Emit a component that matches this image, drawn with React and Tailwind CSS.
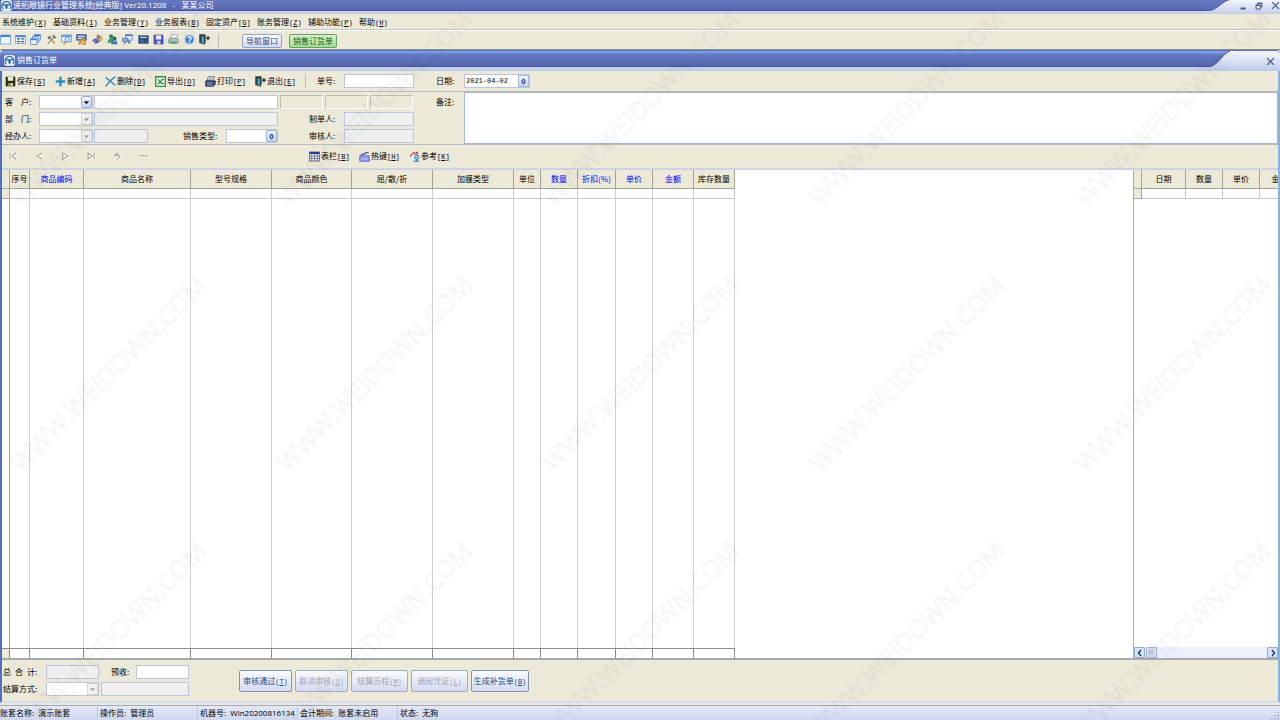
import { useState } from "react";
import clsx from "clsx";

/* ---------- static data ---------- */

const menus = [
  ["系统维护", "X"],
  ["基础资料", "I"],
  ["业务管理", "Y"],
  ["业务报表", "B"],
  ["固定资产", "G", true],
  ["账务管理", "Z"],
  ["辅助功能", "P"],
  ["帮助", "H"],
];

const gridColumns = [
  { title: "序号", width: 20 },
  { title: "商品编码", width: 54, blue: true },
  { title: "商品名称", width: 107 },
  { title: "型号规格", width: 81 },
  { title: "商品颜色", width: 80 },
  { title: "屈/散/折", width: 81 },
  { title: "加膜类型", width: 81 },
  { title: "单位", width: 27 },
  { title: "数量", width: 37, blue: true },
  { title: "折扣(%)", width: 38, blue: true },
  { title: "单价", width: 37, blue: true },
  { title: "金额", width: 41, blue: true },
  { title: "库存数量", width: 41 },
];

const historyColumns = [
  { title: "日期", width: 44 },
  { title: "数量", width: 37 },
  { title: "单价", width: 37 },
  { title: "金额", width: 40 },
];

const statusItems = [
  "账套名称:  演示账套",
  "操作员:  管理员",
  "机器号:  Win20200816134",
  "会计期间:  账套未启用",
  "状态:  无狗",
];

/* ---------- icons ---------- */

function Svg({ children, className = "size-[11px]" }) {
  return (
    <svg viewBox="0 0 16 16" className={clsx("shrink-0", className)} fill="none" aria-hidden="true">
      {children}
    </svg>
  );
}

function AppIcon() {
  return (
    <Svg>
      <rect x="0.5" y="0.5" width="15" height="15" rx="3" fill="#dcecf8" stroke="#f4faff" />
      <path d="M3 13a6.500 6.500 0 1 1 10 0" stroke="#1f5f94" strokeWidth="1.800" />
      <path d="M3 7h10M8 7v6M6 10h4" stroke="#1f5f94" strokeWidth="1.800" />
    </Svg>
  );
}

const toolIcons = {
  导航: (
    <>
      <rect x="1" y="1.500" width="14" height="13" fill="#fff" stroke="#4c86dc" />
      <path d="M1 3h14" stroke="#3f7fe0" strokeWidth="3" />
      <path d="M4 5v9M6 8h7M6 11h7" stroke="#cfe0f6" />
    </>
  ),
  窗体: (
    <>
      <rect x="1" y="2" width="14" height="12" fill="#e6eefb" stroke="#7b8db5" />
      <path d="M1 3h14" stroke="#4b84de" strokeWidth="3" />
      <path d="M3 7h4M3 11h4M9 7h4M9 11h4" stroke="#3a4f85" strokeWidth="2" />
    </>
  ),
  层叠: (
    <>
      <rect x="6" y="1" width="9" height="8" fill="#dbe8fb" stroke="#3f74cc" />
      <path d="M6 2h9" stroke="#3f7fe0" strokeWidth="2" />
      <rect x="3.500" y="4" width="9" height="8" fill="#dbe8fb" stroke="#3f74cc" />
      <rect x="1" y="7" width="9" height="8" fill="#eef4fd" stroke="#3f74cc" />
      <path d="M1 8h9" stroke="#3f7fe0" strokeWidth="2" />
    </>
  ),
  工具: (
    <>
      <path d="M3 14L12 4" stroke="#8b93a0" strokeWidth="2" />
      <path d="M10 2l4 4" stroke="#6a7280" strokeWidth="2.500" />
      <path d="M5 5l8 9" stroke="#d18a35" strokeWidth="2" />
      <path d="M2 5l4-3 1 3-3 3z" fill="#66707d" />
    </>
  ),
  查询: (
    <>
      <rect x="1" y="1.500" width="14" height="10" fill="#eef5fd" stroke="#4a7ccc" />
      <path d="M1 3h14" stroke="#4b84de" strokeWidth="2" />
      <circle cx="9" cy="8" r="3.500" fill="#bfe6f4" stroke="#4f8aa6" />
      <path d="M7 11l-3 4" stroke="#c98b33" strokeWidth="2" />
    </>
  ),
  编辑: (
    <>
      <rect x="1" y="1" width="14" height="8" fill="#5d7cc4" stroke="#34508f" />
      <path d="M3 3.500h9M3 6.500h6" stroke="#e6edfa" strokeWidth="1.500" />
      <path d="M14 7l-6 6-4 2 1-4 6-5z" fill="#e7a63a" stroke="#a5691a" />
      <path d="M13 9v6H9" stroke="#d59028" strokeWidth="2.500" />
    </>
  ),
  单据: (
    <>
      <path d="M1 9l6-3 4 5-6 3z" fill="#7d86ce" stroke="#414c9b" />
      <path d="M7 4l5-2 3 6-4 3z" fill="#e9c46b" stroke="#a7792b" />
      <path d="M8 1l3 6M5 8l3 5" stroke="#3b47a4" strokeWidth="1.500" />
    </>
  ),
  客户: (
    <>
      <circle cx="6" cy="3.500" r="3" fill="#2f7f57" />
      <path d="M1 13c0-5 2-7 5-7s4 2 4 6z" fill="#3c9a68" />
      <circle cx="11" cy="6.500" r="2.800" fill="#2f5d8b" />
      <path d="M6 15c0-4 2-6 5-6s4 2 4 6z" fill="#2c72b0" />
      <path d="M10 10l1 3 1-3" fill="#fff" />
    </>
  ),
  报表: (
    <>
      <rect x="5" y="1" width="10" height="8" fill="#d9e6fa" stroke="#5d7fbb" />
      <path d="M5 2h10" stroke="#4878cc" strokeWidth="2" />
      <rect x="1" y="6" width="7" height="5" fill="#93b4e6" stroke="#46679f" />
      <path d="M10 8v6M5 11l-2 4M8 12h5" stroke="#476aa6" strokeWidth="1.500" />
    </>
  ),
  计算: (
    <>
      <rect x="1" y="2" width="14" height="12" fill="#28466f" stroke="#5476a8" />
      <path d="M3 5h10" stroke="#b7d0ef" strokeWidth="2" />
      <path d="M3 9h6M3 12h6M11 9h2M11 12h2" stroke="#6f91c1" />
    </>
  ),
  存盘: (
    <>
      <path d="M1.500 1.500h13v13h-13z" fill="#4a4fc4" stroke="#30369b" />
      <path d="M4 2h8v6H4z" fill="#e9edfb" />
      <path d="M5 10h6v5H5z" fill="#c5cce9" />
      <path d="M6 11v3" stroke="#30369b" />
    </>
  ),
  打印: (
    <>
      <path d="M6 1h8l-1 6H3z" fill="#fff" stroke="#8b96a8" />
      <path d="M1 8l3-2h8l3 2v5H1z" fill="#b7c0cc" stroke="#6c7788" />
      <path d="M3 11h10v3H3z" fill="#54ae5d" />
    </>
  ),
  帮助: (
    <>
      <circle cx="8" cy="8" r="6.500" fill="#3f83dc" stroke="#9abdee" strokeWidth="1.500" />
      <path d="M5.500 6c0-3 5-3 5 0 0 2-2.500 1.500-2.500 4M8 11v2" stroke="#fff" strokeWidth="1.800" />
    </>
  ),
  退出: (
    <>
      <path d="M1 1h8v12H1z" fill="#3b434c" stroke="#20262c" />
      <path d="M3 2l5 2v11l-5-2z" fill="#46a2b4" stroke="#20313a" />
      <path d="M10 6h6M13 3v6" stroke="#20262c" strokeWidth="1.800" />
    </>
  ),
};

const formIcons = {
  save: (
    <>
      <path d="M1 1h14v14H1z" fill="#242a12" />
      <path d="M4 1h8v6H4z" fill="#e9e9df" />
      <path d="M4 10h8v5H4z" fill="#8d9048" />
      <path d="M9 11h2v3H9z" fill="#fff" />
    </>
  ),
  add: <path d="M8 1v14M1 8h14" stroke="#2b8fc6" strokeWidth="3.500" />,
  remove: <path d="M1 2c4 3 9 7 14 12M15 1C9 5 5 9 1 15" stroke="#2f8cc4" strokeWidth="2" />,
  excel: (
    <>
      <path d="M1 1h14v14H1z" fill="#f5fbf5" stroke="#1f9a3c" strokeWidth="2" />
      <path d="M4 5l7 7M11 5l-7 7M9 5h4M9 11h4" stroke="#1f8a3c" strokeWidth="1.600" />
    </>
  ),
  print: (
    <>
      <path d="M5 1h9l-2 6H3z" fill="#fff" stroke="#3b4668" />
      <path d="M6 3h6M5 5h6" stroke="#6c7698" />
      <path d="M1 7h14v5l-3 3H1z" fill="#3e4a72" stroke="#222a45" />
      <path d="M3 10h8M3 13h8" stroke="#b9c3e0" />
    </>
  ),
  exit: toolIcons["退出"],
  columns: (
    <>
      <path d="M.5 1.500h15v13H.5z" fill="#fff" stroke="#20244c" />
      <path d="M1 3h14" stroke="#2a3790" strokeWidth="3" />
      <path d="M1 7.500h14M1 11h14M4 4v10M8 4v10M12 4v10" stroke="#4a5072" />
    </>
  ),
  hotkey: (
    <>
      <path d="M1 7h14v8H1z" fill="#8f93e6" stroke="#5257bd" />
      <path d="M3 7c1-5 5 0 6-4l5-1" stroke="#4a4fb5" strokeWidth="2" />
      <path d="M3 10h10M3 12.500h10" stroke="#e3e4fb" strokeDasharray="2 1" />
    </>
  ),
  refer: (
    <>
      <path d="M1 7l6-6 6 5-2 1-4-3-4 5z" fill="#d9452b" />
      <path d="M3 8l4-4 5 3-1 6-6 1z" fill="#fff" stroke="#b9c6d6" strokeWidth="0.800" />
      <path d="M10 1h3v4l-3-2z" fill="#c23a20" />
      <circle cx="11" cy="9" r="3.500" fill="#7fbdea" stroke="#3f83b6" />
      <path d="M7 15h8M11 12v3" stroke="#3b6f9d" strokeWidth="1.600" />
    </>
  ),
};

const recordIcons = [
  { label: "首条", path: "M3 3v9M12 3L6 7.500l6 4.500M12 3H9" },
  { label: "上一条", path: "M12 3L4 7.500l8 4.500" },
  { label: "下一条", path: "M4 3v9l8-4.500z" },
  { label: "末条", path: "M3 3v9l6-4.500zM12 3v9" },
  { label: "插入", path: "M3 7l5-4M3 7h9M8 12l4-5M8 3v3" },
  { label: "删行", path: "M2 7h11v2" },
];

/* ---------- small controls ---------- */

function Caption({ text, hotkey, square }) {
  return (
    <span className="whitespace-nowrap">
      {text}
      <span className="font-['Liberation_Mono',monospace] text-[7px]">
        {square ? "[" : "("}
        <u>{hotkey}</u>
        {square ? "]" : ")"}
      </span>
    </span>
  );
}

function Field({ id, className, readOnly, ...rest }) {
  return (
    <input
      id={id}
      type="text"
      readOnly={readOnly}
      className={clsx(
        "h-[14px] border border-[#bcc5df] px-px text-[8px] outline-none",
        readOnly ? "bg-[#efefef]" : "bg-white",
        className
      )}
      {...rest}
    />
  );
}

function Arrow({ kind }) {
  if (kind === "ring") {
    return (
      <Svg className="size-[7px]">
        <path d="M8 3l3 3v4l-3 3-3-3V6z" stroke="#36599c" strokeWidth="3" />
      </Svg>
    );
  }
  return (
    <Svg className="size-[7px]">
      <path d="M2 5h12l-6 7z" fill={kind === "off" ? "#a3a3a3" : "#101820"} />
    </Svg>
  );
}

function Combo({ id, className, kind = "on" }) {
  return (
    <div className={clsx("relative shrink-0", className)}>
      <select
        id={id}
        disabled={kind === "off"}
        className="block h-[14px] w-full appearance-none border border-[#bcc5df] bg-white text-[8px] opacity-100 outline-none"
      />
      <span
        className={clsx(
          "pointer-events-none absolute top-px right-px flex h-[12px] w-[11px] items-center justify-center border",
          kind === "off"
            ? "border-[#d5d5d0] bg-[#f1f0ea]"
            : "rounded-[2px] border-[#9aaed6] bg-linear-to-b from-[#f2f6fe] to-[#c6d4f2]"
        )}
      >
        <Arrow kind={kind} />
      </span>
    </div>
  );
}

function FormButton({ icon, text, hotkey }) {
  return (
    <button type="button" className="flex w-[50px] shrink-0 items-center gap-px">
      <Svg>{formIcons[icon]}</Svg>
      <Caption text={text} hotkey={hotkey} square />
    </button>
  );
}

function ActionButton({ text, hotkey, disabled, className }) {
  return (
    <button
      type="button"
      disabled={disabled}
      className={clsx(
        "h-[22px] rounded-[2px] border bg-linear-to-b from-[#fafbff] to-[#d2daf1]",
        disabled ? "border-[#a3abb8] text-[#a2a4ac]" : "border-[#7f93b0] text-[#1f4a7a]",
        className
      )}
    >
      <Caption text={text} hotkey={hotkey} />
    </button>
  );
}

/* sloped right end of a blue caption bar */
function Slope({ id, from, mid, to }) {
  return (
    <svg viewBox="0 0 24 16" preserveAspectRatio="none" className="h-full w-6 shrink-0" aria-hidden="true">
      <defs>
        <linearGradient id={id} x1="0" y1="0" x2="0" y2="1">
          <stop offset="0" stopColor={from} />
          <stop offset="0.25" stopColor={mid} />
          <stop offset="1" stopColor={to} />
        </linearGradient>
      </defs>
      <path d="M0 0H24C17 2 12 15 3 16H0Z" fill={`url(#${id})`} />
      <path d="M24 0C17 2 12 15 3 15.500H0" fill="none" stroke="#46549c" />
    </svg>
  );
}

function Watermark() {
  const spots = [];
  for (let row = 0; row < 3; row++) {
    for (let col = 0; col < 5; col++) {
      spots.push([108 + col * 266, 107 + row * 266]);
    }
  }
  return (
    <svg className="pointer-events-none absolute inset-0 h-full w-full" aria-hidden="true">
      {spots.map(([x, y]) => (
        <text
          key={`${x}-${y}`}
          transform={`translate(${x} ${y}) rotate(-45)`}
          textAnchor="middle"
          dominantBaseline="central"
          fill="none"
          stroke="#000"
          strokeOpacity="0.070"
          strokeWidth="1"
          className="font-['Open_Sans',sans-serif] text-[25px]"
        >
          WWW.WEIDOWN.COM
        </text>
      ))}
    </svg>
  );
}

/* ---------- page sections ---------- */

function TitleBar() {
  return (
    <header className="flex h-[14px] shrink-0 items-start bg-linear-to-b from-[#f3f6fd] to-[#c3cde9]">
      <div className="flex h-[11px] min-w-0 flex-1 items-center">
        <div className="flex h-full min-w-0 flex-1 items-center gap-px border-b border-[#46549c] bg-linear-to-b from-[#6679c0] via-[#6375bc] via-25% to-[#5868b0] pl-px text-white">
          <AppIcon />
          <h1 className="truncate font-['Open_Sans','Noto_Sans_CJK_SC',sans-serif] whitespace-pre">
            速拓眼镜行业管理系统[经典版] Ver20.1208   -   某某公司
          </h1>
        </div>
        <Slope id="slope-main" from="#6679c0" mid="#6375bc" to="#5868b0" />
      </div>
      <div className="flex h-[11px] w-[51px] shrink-0 items-center justify-end gap-[8px] text-[#4d5c86]">
        <button type="button" aria-label="最小化">
          <Svg className="size-[8px]">
            <path d="M3 13h10" stroke="currentColor" strokeWidth="4" />
          </Svg>
        </button>
        <button type="button" aria-label="还原">
          <Svg className="size-[8px]">
            <path d="M5 5V2h9v8h-3M2 6h9v8H2zM2 7h9M5 3h9" stroke="currentColor" strokeWidth="2" />
          </Svg>
        </button>
        <button type="button" aria-label="关闭">
          <Svg className="size-[9px]">
            <path d="M2 2l12 12M14 2L2 14" stroke="currentColor" strokeWidth="2.500" />
          </Svg>
        </button>
      </div>
    </header>
  );
}

function MenuBar() {
  return (
    <nav className="flex h-[16px] shrink-0 items-center border-b border-[#c5c6ca] pt-px pl-[2px]">
      {menus.map(([text, hotkey, square]) => (
        <button type="button" key={text} className="w-[51px] text-left">
          <Caption text={text} hotkey={hotkey} square={square} />
        </button>
      ))}
    </nav>
  );
}

function ToolBar() {
  const [active, setActive] = useState("销售订货单");
  return (
    <div className="flex h-[20px] shrink-0 items-center border-t border-b border-t-white border-b-[#8e8d88]">
      <div className="flex gap-[4px] border-r border-[#bdbbb0] pr-[8px] pb-[2px]">
        {Object.keys(toolIcons).map((name, i) => (
          <button type="button" key={name} aria-label={name} className={i % 3 === 2 ? "w-[12px]" : "w-[11px]"}>
            <Svg>{toolIcons[name]}</Svg>
          </button>
        ))}
      </div>
      <div className="ml-[23px] flex gap-[7px] pt-px">
        {["导航窗口", "销售订货单"].map((tab) => (
          <button
            type="button"
            key={tab}
            onClick={() => setActive(tab)}
            className={clsx(
              "h-[14px] rounded-[2px] border px-[3px] leading-[12px] whitespace-nowrap",
              active === tab
                ? "border-[#6d9a6d] bg-linear-to-b from-[#d4f5cc] to-[#98e08e] text-[#21542a]"
                : "border-[#8fa3c6] bg-linear-to-b from-[#fafbff] to-[#cfdaf2] text-[#284f7c]"
            )}
          >
            {tab}
          </button>
        ))}
      </div>
    </div>
  );
}

function ChildTitle() {
  return (
    <div className="flex h-[21px] shrink-0 items-start rounded-t-[4px] border-t border-[#5372c4] bg-linear-to-b from-[#f6f9ff] to-[#bccbe9]">
      <div className="flex h-[16px] min-w-0 flex-1">
        <div className="flex min-w-0 flex-1 items-center gap-[2px] rounded-tl-[4px] border-b border-[#46549c] bg-linear-to-b from-[#86a9ea] via-[#6378c0] via-25% to-[#5666ae] pt-[3px] pl-[4px] text-white">
          <AppIcon />
          <h2>销售订货单</h2>
        </div>
        <Slope id="slope-child" from="#86a9ea" mid="#6378c0" to="#5666ae" />
      </div>
      <div className="flex h-[20px] w-[50px] shrink-0 items-center justify-end pr-[5px] text-[#4d5c86]">
        <button type="button" aria-label="关闭窗口">
          <Svg className="size-[9px]">
            <path d="M2 2l12 12M14 2L2 14" stroke="currentColor" strokeWidth="2.500" />
          </Svg>
        </button>
      </div>
    </div>
  );
}

function FormToolbar() {
  return (
    <div className="flex h-[21px] shrink-0 items-center border-b border-[#b9bac0] pl-[3px]">
      <FormButton icon="save" text="保存" hotkey="S" />
      <FormButton icon="add" text="新增" hotkey="A" />
      <FormButton icon="remove" text="删除" hotkey="D" />
      <FormButton icon="excel" text="导出" hotkey="O" />
      <FormButton icon="print" text="打印" hotkey="P" />
      <FormButton icon="exit" text="退出" hotkey="E" />
      <span className="h-[12px] border-r border-[#bdbbb0]" />
      <label htmlFor="billNo" className="w-[38px] shrink-0 pl-[11px]">单号:</label>
      <Field id="billNo" className="w-[70px]" />
      <label htmlFor="billDate" className="w-[50px] shrink-0 pl-[22px]">日期:</label>
      <div className="flex h-[14px] w-[66px] items-center border border-[#bcc5df] bg-white">
        <input
          id="billDate"
          type="text"
          defaultValue="2021-04-02"
          className="w-[53px] pl-px font-['Liberation_Mono',monospace] text-[7px] outline-none"
        />
        <button
          type="button"
          aria-label="选择日期"
          className="flex h-[12px] w-[11px] items-center justify-center border border-[#a9b9dc] bg-linear-to-b from-[#f2f6fe] to-[#c6d4f2]"
        >
          <Arrow kind="ring" />
        </button>
      </div>
    </div>
  );
}

function FormHeader() {
  const sunken = "h-[14px] w-[43px] border border-[#c2bfb2] border-r-white border-b-white";
  return (
    <div className="flex h-[53px] shrink-0 border-b border-[#b9bac0] pl-[3px]">
      <div className="flex w-[409px] shrink-0 flex-col gap-[3px] pt-[3px]">
        <div className="flex items-center gap-px">
          <label htmlFor="customer" className="w-[33px] shrink-0">客　户:</label>
          <Combo id="customer" className="w-[54px]" />
          <Field aria-label="客户名称" className="mr-px w-[184px]" />
          <span className={sunken} />
          <span className={clsx(sunken, "ml-px")} />
          <span className={clsx(sunken, "ml-px")} />
        </div>
        <div className="flex items-center gap-px">
          <label htmlFor="dept" className="w-[33px] shrink-0">部　门:</label>
          <Combo id="dept" className="w-[54px]" kind="off" />
          <Field aria-label="部门名称" className="w-[184px]" readOnly />
          <label htmlFor="maker" className="ml-[30px] w-[34px] shrink-0">制单人:</label>
          <Field id="maker" className="w-[70px]" readOnly />
        </div>
        <div className="flex items-center gap-px">
          <label htmlFor="handler" className="w-[33px] shrink-0">经办人:</label>
          <Combo id="handler" className="w-[54px]" kind="off" />
          <Field aria-label="经办人姓名" className="w-[54px]" readOnly />
          <label htmlFor="saleType" className="ml-[34px] w-[42px] shrink-0">销售类型:</label>
          <Combo id="saleType" className="w-[52px]" kind="ring" />
          <label htmlFor="auditor" className="ml-[30px] w-[34px] shrink-0">审核人:</label>
          <Field id="auditor" className="w-[70px]" readOnly />
        </div>
      </div>
      <label htmlFor="remark" className="w-[50px] shrink-0 pt-[4px] pl-[22px]">备注:</label>
      <textarea
        id="remark"
        className="h-full min-w-0 flex-1 resize-none border border-[#a9b4d4] bg-white text-[8px] outline-none"
      />
    </div>
  );
}

function RecordBar() {
  return (
    <div className="flex h-[25px] shrink-0 items-center border-b-2 border-[#cdd3e4] pl-[6px]">
      <div className="flex w-[301px] gap-[15px]">
        {recordIcons.map(({ label, path }) => (
          <button type="button" key={label} aria-label={label} disabled>
            <Svg>
              <path d={path} stroke="#fff" strokeWidth="1.500" transform="translate(1.500 1.500)" />
              <path d={path} stroke="#aaa798" strokeWidth="1.500" />
            </Svg>
          </button>
        ))}
      </div>
      <FormButton icon="columns" text="表栏" hotkey="B" />
      <FormButton icon="hotkey" text="热键" hotkey="H" />
      <FormButton icon="refer" text="参考" hotkey="K" />
    </div>
  );
}

function HeadRow({ columns }) {
  return (
    <tr className="h-[19px]">
      <th className="border-r border-b border-[#a9a89c] bg-[#ece9d8]" />
      {columns.map((col) => (
        <th
          key={col.title}
          className={clsx(
            "overflow-hidden border-r border-b border-[#a3a297] bg-[#ece9d8] p-0 font-normal whitespace-nowrap",
            col.blue && "text-[#0000ff]"
          )}
        >
          {col.title}
        </th>
      ))}
    </tr>
  );
}

function OrderGrid() {
  return (
    <div className="min-w-0 flex-1 overflow-hidden bg-white">
      <table className="h-full w-[733px] table-fixed border-separate border-spacing-0">
        <colgroup>
          <col className="w-[8px]" />
          {gridColumns.map((col) => (
            <col key={col.title} style={{ width: col.width }} />
          ))}
        </colgroup>
        <thead>
          <HeadRow columns={gridColumns} />
        </thead>
        <tbody>
          <tr className="h-[10px]">
            <td className="border-r border-b border-[#a9a89c] bg-[#ece9d8] p-0" />
            {gridColumns.map((col) => (
              <td key={col.title} className="border-r border-b border-[#c9c9c9] p-0" />
            ))}
          </tr>
          <tr>
            <td className="border-r border-[#a0a0a0] p-0" />
            {gridColumns.map((col) => (
              <td key={col.title} className="border-r border-[#cfcfcf] p-0" />
            ))}
          </tr>
        </tbody>
        <tfoot>
          <tr className="h-[10px]">
            <td className="border-t border-r border-[#8c8c8c] bg-[#ece9d8] p-0" />
            {gridColumns.map((col) => (
              <td key={col.title} className="border-t border-r border-[#8c8c8c] p-0" />
            ))}
          </tr>
        </tfoot>
      </table>
    </div>
  );
}

function ScrollArrow({ label, d }) {
  return (
    <button
      type="button"
      aria-label={label}
      className="flex size-[11px] shrink-0 items-center justify-center rounded-[1px] border border-[#97a9d2] bg-[#d8e2f7]"
    >
      <Svg className="size-[8px]">
        <path d={d} stroke="#1e3c74" strokeWidth="3" />
      </Svg>
    </button>
  );
}

function HistoryGrid() {
  return (
    <div className="flex w-[145px] shrink-0 flex-col overflow-hidden border-l border-[#a3aacb] bg-white">
      <div className="min-h-0 flex-1 overflow-hidden">
        <table className="w-[166px] table-fixed border-separate border-spacing-0">
          <colgroup>
            <col className="w-[8px]" />
            {historyColumns.map((col) => (
              <col key={col.title} style={{ width: col.width }} />
            ))}
          </colgroup>
          <thead>
            <HeadRow columns={historyColumns} />
          </thead>
          <tbody>
            <tr className="h-[10px]">
              <td className="border-r border-b border-[#a9a89c] bg-[#ece9d8] p-0" />
              {historyColumns.map((col) => (
                <td key={col.title} className="border-r border-b border-[#c9c9c9] p-0" />
              ))}
            </tr>
          </tbody>
        </table>
      </div>
      <div className="flex h-[11px] shrink-0 bg-[#ebf0fc]">
        <ScrollArrow label="向左" d="M10 2L5 8l5 6" />
        <div className="flex min-w-0 flex-1 pl-px">
          <span className="flex size-[11px] items-center justify-center rounded-[1px] border border-[#a3b2d6] bg-[#d5def3]">
            <Svg className="size-[7px]">
              <path d="M3 2v12M7 2v12M11 2v12" stroke="#a9b0c6" strokeWidth="2" />
            </Svg>
          </span>
        </div>
        <ScrollArrow label="向右" d="M6 2l5 6-5 6" />
      </div>
    </div>
  );
}

function FooterPanel() {
  return (
    <div className="flex h-[43px] shrink-0 border-t-2 border-[#a9a9ad] pl-px">
      <div className="flex w-[236px] shrink-0 flex-col gap-[3px] pt-[5px]">
        <div className="flex items-center">
          <label htmlFor="total" className="w-[43px] shrink-0">总&ensp;合&ensp;计:</label>
          <Field id="total" className="w-[53px]" readOnly />
          <label htmlFor="prepaid" className="w-[37px] shrink-0 pl-[12px]">预收:</label>
          <Field id="prepaid" className="w-[53px]" />
        </div>
        <div className="flex items-center gap-[2px]">
          <label htmlFor="settle" className="w-[41px] shrink-0">结算方式:</label>
          <Combo id="settle" className="w-[53px]" kind="off" />
          <Field aria-label="结算方式名称" className="w-[88px]" readOnly />
        </div>
      </div>
      <div className="flex items-start gap-[3px] pt-[10px]">
        <ActionButton text="审核通过" hotkey="T" className="w-[53px]" />
        <ActionButton text="取消审核" hotkey="Q" className="w-[53px]" disabled />
        <ActionButton text="结算历程" hotkey="M" className="w-[57px]" disabled />
        <ActionButton text="调阅凭证" hotkey="L" className="w-[57px]" disabled />
        <ActionButton text="生成补货单" hotkey="B" className="w-[58px]" />
      </div>
    </div>
  );
}

function StatusBar() {
  return (
    <footer className="flex h-[15px] shrink-0 items-center border-t border-[#a4a9bb] bg-linear-to-b from-[#e3e9f8] to-[#cfd8ef] font-['Open_Sans','Noto_Sans_CJK_SC',sans-serif]">
      {statusItems.map((item, i) => (
        <span
          key={item}
          className={clsx(
            "whitespace-pre",
            i === 0 && "w-[97px]",
            i > 0 && "border-l border-[#bcc5dc] pl-[2px]",
            i > 0 && i < 4 && "w-[100px]",
            i === 4 && "flex-1"
          )}
        >
          {item}
        </span>
      ))}
      <Svg className="size-[10px] self-end">
        <path d="M2 14h2M7 14h2M12 14h2M7 9h2M12 9h2M12 4h2" stroke="#8f98b5" strokeWidth="2" />
      </Svg>
    </footer>
  );
}

export default function App() {
  return (
    <div className="relative flex h-screen flex-col overflow-hidden bg-[#ece9d8] font-['Noto_Sans_CJK_SC',sans-serif] text-[8px] leading-[12px] text-black">
      <TitleBar />
      <MenuBar />
      <ToolBar />
      <main className="flex min-h-0 flex-1 flex-col">
        <ChildTitle />
        <div className="flex min-h-0 flex-1 flex-col border-r-2 border-b-2 border-l-2 border-r-[#86b4dc] border-b-[#d5def4] border-l-[#4f6fc1]">
          <FormToolbar />
          <FormHeader />
          <RecordBar />
          <div className="flex min-h-0 flex-1">
            <OrderGrid />
            <HistoryGrid />
          </div>
          <FooterPanel />
        </div>
      </main>
      <div className="h-[2px] shrink-0" />
      <StatusBar />
      <Watermark />
    </div>
  );
}
